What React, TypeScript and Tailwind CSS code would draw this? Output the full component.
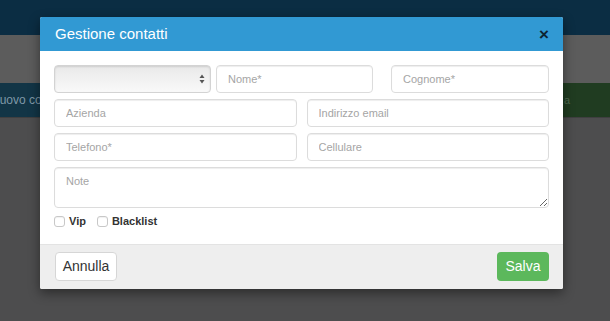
import React from 'react';

const font = { fontFamily: '"Liberation Sans", Arial, sans-serif' };

function Field({ placeholder, className = '' }: { placeholder: string; className?: string }) {
  return (
    <input
      placeholder={placeholder}
      className={`h-[28px] rounded-[4px] border border-[#dcdcdc] bg-white px-[11px] text-[11px] text-[#555] placeholder:text-[#a5a5a5] shadow-[inset_0_1px_1px_rgba(0,0,0,0.07)] outline-none ${className}`}
    />
  );
}

function Check({ label }: { label: string }) {
  return (
    <label className="flex items-center gap-[4px]">
      <span className="h-[11px] w-[11px] rounded-[3px] border border-[#c8c8c8] bg-white shadow-[inset_0_1px_1px_rgba(0,0,0,0.06)]" />
      <span className="text-[11px] font-bold text-[#333]">{label}</span>
    </label>
  );
}

export default function App() {
  return (
    <div className="relative flex h-[321px] w-[610px] flex-col overflow-hidden bg-[#4d4d4e]" style={font}>
      {/* page behind the overlay */}
      <div className="h-[35px] bg-[#0b2d43]" />
      <div className="h-[48px] bg-[#5c5c5c]" />
      <div className="flex h-[34px] items-center justify-between">
        <div className="flex h-full w-[140px] items-center overflow-hidden bg-[#123546]">
          <span className="-ml-[9px] whitespace-nowrap text-[12px] text-[#7f98a6]">Nuovo contatto</span>
        </div>
        <div className="flex h-full w-[140px] items-center justify-end bg-[#203c21] pr-[40px]">
          <span className="text-[11px] text-[#4f6a50]">a</span>
        </div>
      </div>
      <div className="h-px bg-[#3f3f40]" />
      <div className="flex-1 bg-[#4d4d4e]" />

      {/* modal */}
      <div className="absolute left-[40px] top-[17px] w-[523px] overflow-hidden rounded-[2px] bg-white shadow-[0_4px_12px_rgba(0,0,0,0.45)]">
        <div className="flex h-[34px] items-center justify-between bg-[#3199d3] pl-[15px] pr-[14px]">
          <span className="text-[15px] text-white">Gestione contatti</span>
          <span className="text-[17px] font-bold leading-none text-[#0d2431]">×</span>
        </div>

        <div className="flex flex-col gap-[6px] px-[14px] pb-[14px] pt-[14px]">
          <div className="flex">
            <div className="flex h-[28px] w-[157px] items-center justify-end rounded-[4px] border border-[#d3d3d3] bg-gradient-to-b from-[#e9e9e9] to-[#f9f9f9] pr-[5px] shadow-[inset_0_1px_2px_rgba(0,0,0,0.12)]">
              <svg width="6" height="10" viewBox="0 0 6 10">
                <path d="M3 0.5 L5.5 4 H0.5 Z" fill="#555" />
                <path d="M3 9.5 L5.5 6 H0.5 Z" fill="#555" />
              </svg>
            </div>
            <Field placeholder="Nome*" className="ml-[5px] w-[157px]" />
            <Field placeholder="Cognome*" className="ml-[18px] w-[158px]" />
          </div>
          <div className="grid grid-cols-2 gap-[10px]">
            <Field placeholder="Azienda" />
            <Field placeholder="Indirizzo email" />
          </div>
          <div className="grid grid-cols-2 gap-[10px]">
            <Field placeholder="Telefono*" />
            <Field placeholder="Cellulare" />
          </div>
          <textarea
            placeholder="Note"
            className="h-[41px] rounded-[4px] border border-[#dcdcdc] px-[11px] py-[5px] text-[11px] text-[#555] placeholder:text-[#a5a5a5] shadow-[inset_0_1px_1px_rgba(0,0,0,0.07)] outline-none"
          />
          <div className="-mt-[1px] flex items-center gap-[11px]">
            <Check label="Vip" />
            <Check label="Blacklist" />
          </div>
        </div>

        <div className="flex h-[45px] items-center justify-between border-t border-[#e3e3e3] bg-[#eeeeee] pl-[15px] pr-[14px]">
          <button className="h-[29px] w-[62px] rounded-[4px] border border-[#d6d6d6] bg-white text-[14px] text-[#333]">Annulla</button>
          <button className="h-[29px] w-[52px] rounded-[4px] bg-[#5cb85c] text-[14px] text-white">Salva</button>
        </div>
      </div>
    </div>
  );
}
